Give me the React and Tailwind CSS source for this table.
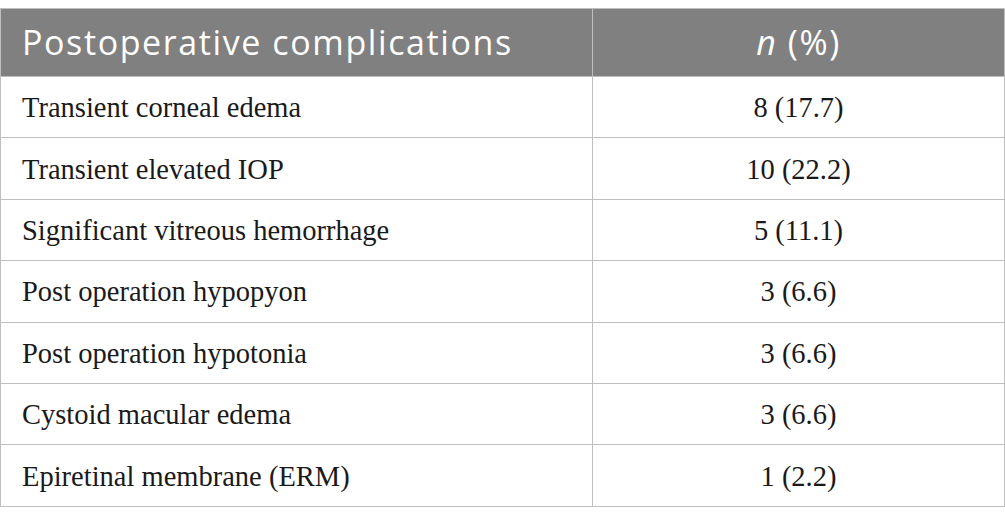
const rows = [
  ['Transient corneal edema', '8 (17.7)'],
  ['Transient elevated IOP', '10 (22.2)'],
  ['Significant vitreous hemorrhage', '5 (11.1)'],
  ['Post operation hypopyon', '3 (6.6)'],
  ['Post operation hypotonia', '3 (6.6)'],
  ['Cystoid macular edema', '3 (6.6)'],
  ['Epiretinal membrane (ERM)', '1 (2.2)'],
];

const App = () => {
  return (
    <main className="w-[1005px] h-[525px] bg-white pt-2">
      <table className="w-full border-collapse border border-[#bfbfbf]">
        <thead>
          <tr className="h-[68px] bg-[#7f807f] text-white font-['Open_Sans',sans-serif] text-[34px] tracking-[1.6px]">
            <th className="w-[592px] pl-[21px] text-left font-normal border border-[#bfbfbf]">
              Postoperative complications
            </th>
            <th className="font-normal text-center border border-[#bfbfbf]">
              <i>n</i> (%)
            </th>
          </tr>
        </thead>
        <tbody className="font-['Liberation_Serif',serif] text-[28.5px] text-[#1a1a1a]">
          {rows.map(([label, value]) => (
            <tr key={label} className="h-[61.4px]">
              <td className="pl-[21px] pt-[3px] border border-[#bfbfbf]">{label}</td>
              <td className="text-center pt-[3px] border border-[#bfbfbf]">{value}</td>
            </tr>
          ))}
        </tbody>
      </table>
    </main>
  );
};

export default App;
